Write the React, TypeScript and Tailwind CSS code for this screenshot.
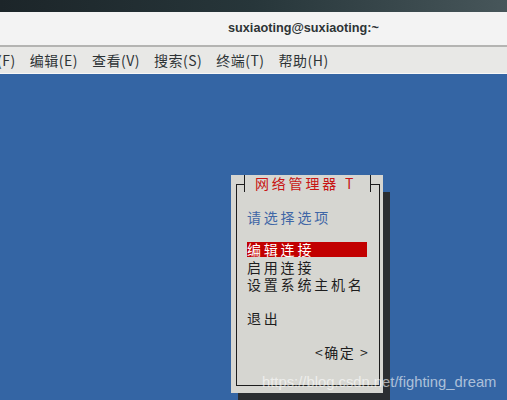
import React from 'react'

const cjk = { fontFamily: '"Noto Sans CJK SC", "Noto Sans", sans-serif' }

const menus = ['(F)', '编辑(E)', '查看(V)', '搜索(S)', '终端(T)', '帮助(H)']

export default function App() {
  return (
    <div className="relative w-[507px] h-[400px] overflow-hidden flex flex-col">
      {/* desktop top strip */}
      <div className="h-[12px] bg-gradient-to-r from-[#1c2529] via-[#27363a] to-[#47565a]" />

      {/* window title */}
      <div className="h-[33px] bg-[#f3f3f3] flex items-center pl-[228px]">
        <span
          className="text-[12.7px] font-bold text-[#2e3436]"
          style={{ fontFamily: '"Liberation Sans", sans-serif' }}
        >
          suxiaoting@suxiaoting:~
        </span>
      </div>
      <div className="h-[2px] bg-[#b4b4b2]" />

      {/* menu bar */}
      <div className="h-[26px] bg-[#e8e8e6] flex items-center gap-[14px] ml-[-3px] text-[14px] tracking-[0.5px] text-[#2e3436]" style={cjk}>
        {menus.map((m) => (
          <span key={m} className="leading-none">{m}</span>
        ))}
      </div>
      <div className="h-px bg-[#f7f7f7]" />

      {/* terminal area */}
      <div className="flex-1 bg-[#3465a4] pl-[231px] pt-[101px]">
        <div className="w-[152px] h-[218px] bg-[#d6d6d1] pl-[5px] shadow-[7px_17px_0_0_#2b2e31]" style={cjk}>
          {/* title row */}
          <div className="flex h-[17px] w-[144px]">
            <div className="w-[8px] h-[8px] self-end border-t border-l border-[#1c1c1c]" />
            <div className="w-px h-full bg-[#1c1c1c]" />
            <div className="flex-1 pl-[10px] text-[14px] leading-[17px] tracking-[2.8px] text-[#c81414] whitespace-pre">
              网络管理器 T
            </div>
            <div className="w-px h-full bg-[#1c1c1c]" />
            <div className="w-[9px] h-[8px] self-end border-t border-r border-[#1c1c1c]" />
          </div>

          {/* body */}
          <div className="w-[144px] h-[194px] border-l border-r border-b border-[#1c1c1c] pl-[10px] pt-[17px] text-[14px] leading-[17px] tracking-[2.8px] text-[#1e1e1e]">
            <div className="text-[#3f66a6]">请选择选项</div>
            <div className="h-[16px]" />
            <div className="w-[120px] h-[17px]">
              <div className="h-[15px] bg-[#c20000] text-white leading-[15px]">编辑连接</div>
            </div>
            <div>启用连接</div>
            <div>设置系统主机名</div>
            <div className="h-[17px]" />
            <div>退出</div>
            <div className="h-[17px]" />
            <div className="pl-[68px] whitespace-pre tracking-[1.5px]">&lt;确定 &gt;</div>
          </div>
        </div>
      </div>

      {/* watermark */}
      <div
        className="absolute left-[262px] top-[372px] text-[14.8px] leading-[20px] text-white/60"
        style={{ fontFamily: '"Liberation Sans", sans-serif' }}
      >
        https://blog.csdn.net/fighting_dream
      </div>
    </div>
  )
}
